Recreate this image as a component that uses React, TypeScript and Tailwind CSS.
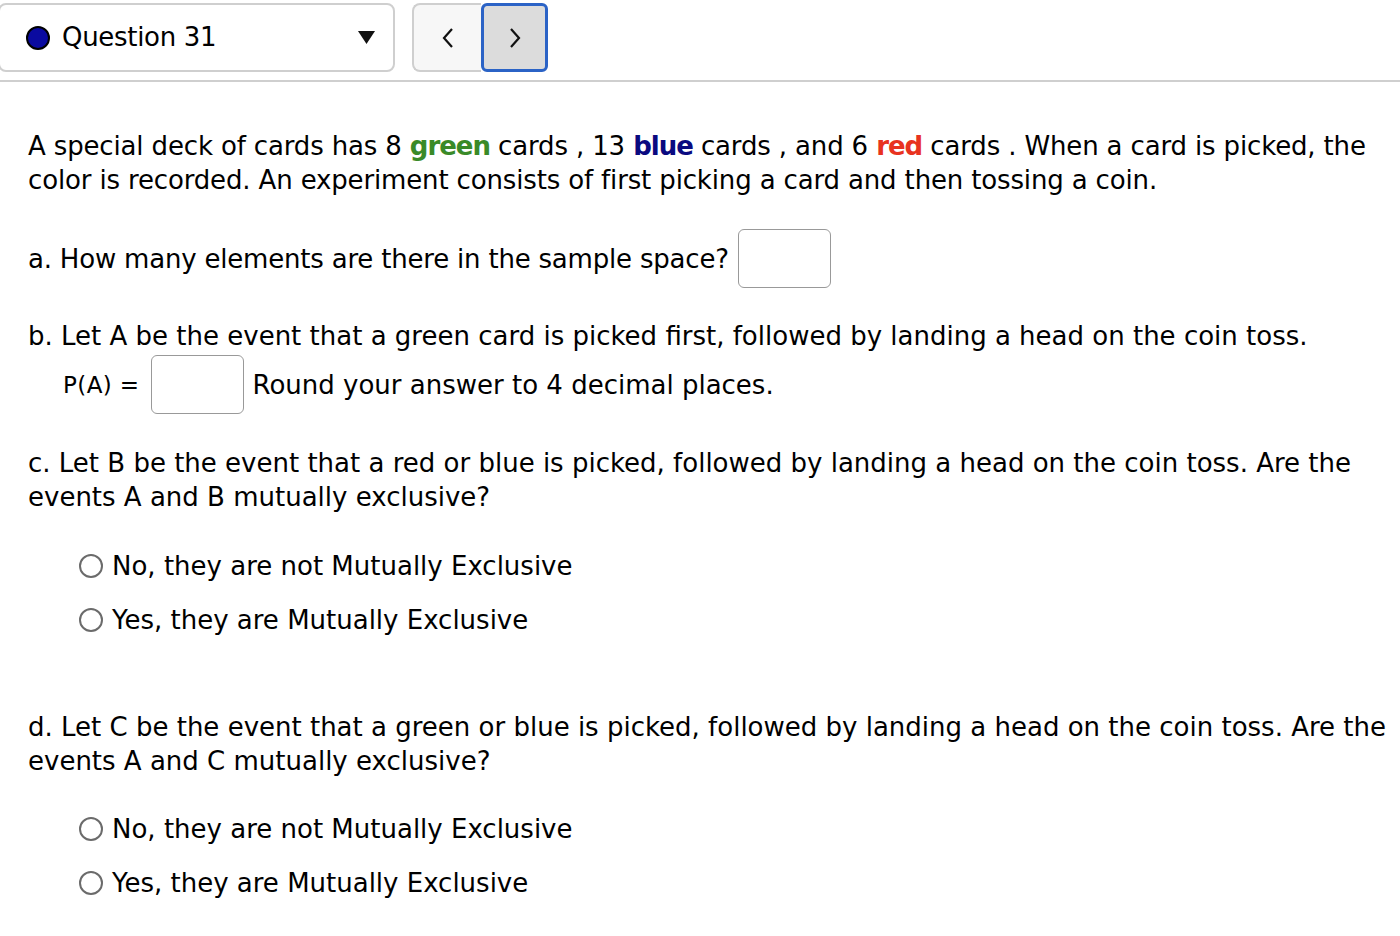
import React from "react";

const Radio = ({ label }: { label: string }) => (
  <label className="flex items-center gap-[9px] h-[54px]">
    <span className="w-[24px] h-[24px] rounded-full border-2 border-[#6b6b6b] bg-white" />
    <span>{label}</span>
  </label>
);

const Box = ({ className = "" }: { className?: string }) => (
  <span className={`inline-block shrink-0 w-[93px] h-[59px] rounded-[6px] border-[1.5px] border-[#999] bg-white ${className}`} />
);

export default function App() {
  return (
    <div
      className="w-[1400px] h-[936px] bg-white text-black overflow-hidden"
      style={{ fontFamily: "'DejaVu Sans', 'Open Sans', sans-serif" }}
    >
      {/* top bar */}
      <div className="flex items-start h-[82px] border-b-2 border-[#cfcfcf] pt-[3px]">
        <div className="w-[397px] h-[69px] rounded-[8px] border-2 border-[#cfcfcf] flex items-center pl-[26px] pr-[18px] ml-[-2px]">
          <span className="w-[24px] h-[24px] rounded-full bg-[#0a0aa0] border-2 border-black" />
          <span className="ml-[12px] text-[26px] tracking-[-0.3px] flex-1">Question 31</span>
          <svg width="17" height="13" viewBox="0 0 17 13">
            <polygon points="0,0 17,0 8.5,13" fill="#111" />
          </svg>
        </div>
        <div className="flex ml-[17px]">
          <button className="w-[69px] h-[69px] rounded-l-[8px] border-2 border-r-0 border-[#cfcfcf] bg-[#f7f7f7] flex items-center justify-center">
            <svg width="14" height="22" viewBox="0 0 14 22" fill="none" stroke="#111" strokeWidth="2.2">
              <polyline points="11,2 3,11 11,20" />
            </svg>
          </button>
          <button className="w-[67px] h-[69px] rounded-[6px] border-[3px] border-[#2b63c6] bg-[#dcdcdc] flex items-center justify-center">
            <svg width="14" height="22" viewBox="0 0 14 22" fill="none" stroke="#111" strokeWidth="2.2">
              <polyline points="3,2 11,11 3,20" />
            </svg>
          </button>
        </div>
      </div>

      <div className="pl-[28px] text-[26px] leading-[34px]">
        <p className="mt-[47px] tracking-[-0.15px]">
          A special deck of cards has 8 <b className="text-[#3a8a28] tracking-[-1px]">green</b> cards , 13{" "}
          <b className="text-[#0a0a80] tracking-[-1px]">blue</b> cards , and 6{" "}
          <b className="text-[#e8321f] tracking-[-1px]">red</b> cards . When a card is picked, the color is recorded. An experiment consists of first picking a card and then tossing a coin.
        </p>

        <div className="mt-[32px] flex items-center h-[59px]">
          <span className="tracking-[-0.2px]">a. How many elements are there in the sample space?</span>
          <Box className="ml-[9px]" />
        </div>

        <p className="mt-[31px]">
          b. Let A be the event that a green card is picked first, followed by landing a head on the coin toss.
        </p>
        <div className="pl-[35px] mt-[2px] flex items-center h-[59px]">
          <span className="text-[23px] tracking-[0.4px]">P(A) =</span>
          <Box className="ml-[11px] mr-[9px]" />
          <span>Round your answer to 4 decimal places.</span>
        </div>

        <p className="mt-[32px]">
          c. Let B be the event that a red or blue is picked, followed by landing a head on the coin toss. Are the events A and B mutually exclusive?
        </p>
        <div className="pl-[51px] mt-[25px]">
          <Radio label="No, they are not Mutually Exclusive" />
          <Radio label="Yes, they are Mutually Exclusive" />
        </div>

        <p className="mt-[63px]">
          d. Let C be the event that a green or blue is picked, followed by landing a head on the coin toss. Are the events A and C mutually exclusive?
        </p>
        <div className="pl-[51px] mt-[24px]">
          <Radio label="No, they are not Mutually Exclusive" />
          <Radio label="Yes, they are Mutually Exclusive" />
        </div>
      </div>
    </div>
  );
}
